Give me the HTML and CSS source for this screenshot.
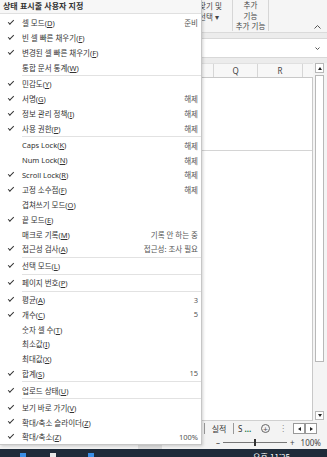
FILE: index.html
```html
<!DOCTYPE html>
<html lang="ko">
<head>
  <meta charset="UTF-8">
  <meta name="viewport" content="width=device-width, initial-scale=1.0">
  <title>상태 표시줄 사용자 지정</title>
  <link rel="stylesheet" href="styles.css">
</head>
<body>
  <div class="excel">
    <div class="ribbon">
      <div class="group find">
        <div>찾기 및</div>
        <div>선택 ▾</div>
      </div>
      <div class="group addins">
        <div>추가</div>
        <div>기능</div>
        <div class="group-label">추가 기능</div>
      </div>
      <div class="collapse">
        <svg width="7" height="4" viewBox="0 0 7 4"><polyline points="0.5,3.5 3.5,0.5 6.5,3.5" fill="none" stroke="#555" stroke-width="1"/></svg>
      </div>
    </div>

    <div class="formula-area">
      <div class="formula-box">
        <svg width="5" height="3" viewBox="0 0 5 3"><polyline points="0.5,0.5 2.5,2.5 4.5,0.5" fill="none" stroke="#555" stroke-width="1"/></svg>
      </div>
    </div>

    <div class="sheet">
      <div class="grid">
        <div class="col-heads">
          <div class="col-head first"></div>
          <div class="col-head q">Q</div>
          <div class="col-head r">R</div>
          <div class="col-head rest"></div>
        </div>
        <div class="cells">
          <div class="cell-row"></div>
        </div>
      </div>
      <div class="vscroll">
        <div class="sbtn up"><span class="tri-up"></span></div>
        <div class="thumb"></div>
        <div class="sbtn down"><span class="tri-down"></span></div>
      </div>
    </div>

    <div class="tabs">
      <span class="tab-sep"></span>
      <span class="tab">실적</span>
      <span class="tab-sep"></span>
      <span class="tab small">S <b class="more">...</b></span>
      <span class="add">+</span>
      <span class="dots">⋮</span>
      <span class="hbtn"><span class="tri-left"></span></span>
      <span class="hbtn"><span class="tri-right"></span></span>
    </div>

    <div class="status">
      <span class="view-btn"></span>
      <span class="zoom-minus">–</span>
      <span class="track"><span class="knob"></span></span>
      <span class="zoom-plus">+</span>
      <span class="zoom-val">100%</span>
    </div>

    <div class="taskbar">
      <span class="tb-icon blue"></span>
      <span class="tb-icon white"></span>
      <span class="tb-icon blue"></span>
      <span class="clock">오후 11:25</span>
    </div>
  </div>

  <div class="menu">
    <div class="menu-title">상태 표시줄 사용자 지정</div>
    <div class="menu-list">
      <div class="item on"><span class="chk"></span><span class="label">셀 모드(<u>D</u>)</span><span class="val">준비</span></div>
      <div class="item on"><span class="chk"></span><span class="label">빈 셀 빠른 채우기(<u>F</u>)</span></div>
      <div class="item on"><span class="chk"></span><span class="label">변경된 셀 빠른 채우기(<u>F</u>)</span></div>
      <div class="item"><span class="chk"></span><span class="label">통합 문서 통계(<u>W</u>)</span></div>
      <div class="sep"></div>
      <div class="item on"><span class="chk"></span><span class="label">민감도(<u>Y</u>)</span></div>
      <div class="item on"><span class="chk"></span><span class="label">서명(<u>G</u>)</span><span class="val">해제</span></div>
      <div class="item on"><span class="chk"></span><span class="label">정보 관리 정책(<u>I</u>)</span><span class="val">해제</span></div>
      <div class="item on"><span class="chk"></span><span class="label">사용 권한(<u>P</u>)</span><span class="val">해제</span></div>
      <div class="sep"></div>
      <div class="item"><span class="chk"></span><span class="label">Caps Lock(<u>K</u>)</span><span class="val">해제</span></div>
      <div class="item"><span class="chk"></span><span class="label">Num Lock(<u>N</u>)</span><span class="val">해제</span></div>
      <div class="item on"><span class="chk"></span><span class="label">Scroll Lock(<u>R</u>)</span><span class="val">해제</span></div>
      <div class="item on"><span class="chk"></span><span class="label">고정 소수점(<u>F</u>)</span><span class="val">해제</span></div>
      <div class="item"><span class="chk"></span><span class="label">겹쳐쓰기 모드(<u>O</u>)</span></div>
      <div class="item on"><span class="chk"></span><span class="label">끝 모드(<u>E</u>)</span></div>
      <div class="item"><span class="chk"></span><span class="label">매크로 기록(<u>M</u>)</span><span class="val">기록 안 하는 중</span></div>
      <div class="item on"><span class="chk"></span><span class="label">접근성 검사(<u>A</u>)</span><span class="val">접근성: 조사 필요</span></div>
      <div class="sep"></div>
      <div class="item on"><span class="chk"></span><span class="label">선택 모드(<u>L</u>)</span></div>
      <div class="sep"></div>
      <div class="item on"><span class="chk"></span><span class="label">페이지 번호(<u>P</u>)</span></div>
      <div class="sep"></div>
      <div class="item on"><span class="chk"></span><span class="label">평균(<u>A</u>)</span><span class="val">3</span></div>
      <div class="item on"><span class="chk"></span><span class="label">개수(<u>C</u>)</span><span class="val">5</span></div>
      <div class="item"><span class="chk"></span><span class="label">숫자 셀 수(<u>T</u>)</span></div>
      <div class="item"><span class="chk"></span><span class="label">최소값(<u>I</u>)</span></div>
      <div class="item"><span class="chk"></span><span class="label">최대값(<u>X</u>)</span></div>
      <div class="item on"><span class="chk"></span><span class="label">합계(<u>S</u>)</span><span class="val">15</span></div>
      <div class="sep"></div>
      <div class="item on"><span class="chk"></span><span class="label">업로드 상태(<u>U</u>)</span></div>
      <div class="sep"></div>
      <div class="item on"><span class="chk"></span><span class="label">보기 바로 가기(<u>V</u>)</span></div>
      <div class="item on"><span class="chk"></span><span class="label">확대/축소 슬라이더(<u>Z</u>)</span></div>
      <div class="item on"><span class="chk"></span><span class="label">확대/축소(<u>Z</u>)</span><span class="val">100%</span></div>
    </div>
  </div>
</body>
</html>
```

FILE: styles.css
```css
body {
  margin: 0;
  width: 327px;
  height: 457px;
  overflow: hidden;
  position: relative;
  font-family: "Noto Sans", "Noto Sans CJK KR", sans-serif;
  font-size: 7.5px;
  color: #333;
  background-color: #fff;
}

.excel {
  display: flex;
  flex-direction: column;
  height: 457px;
}

/* ribbon */
.ribbon {
  height: 33px;
  box-sizing: border-box;
  display: flex;
  padding-left: 197px;
  background-color: #f5f5f5;
  border-bottom: 1px solid #dadada;
  font-family: "Noto Sans CJK KR", sans-serif;
  color: #444;
  line-height: 11px;
}

.group {
  height: 31px;
}

.find {
  width: 35px;
  padding-left: 2px;
  box-sizing: border-box;
}

.addins {
  width: 35px;
  border-left: 1px solid #d6d6d6;
  border-right: 1px solid #d6d6d6;
  text-align: center;
  line-height: 10.5px;
}

.group-label {
  margin-top: 0;
}

.collapse {
  flex: 1;
  display: flex;
  justify-content: flex-end;
  align-items: flex-end;
  padding: 0 6px 3px 0;
}

.collapse svg,
.formula-box svg {
  display: block;
}

/* formula bar */
.formula-area {
  height: 30px;
  box-sizing: border-box;
  padding-top: 5px;
  background-color: #ececec;
}

.formula-box {
  height: 20px;
  box-sizing: border-box;
  background-color: #fff;
  border-top: 1px solid #d8d8d8;
  border-bottom: 1px solid #d8d8d8;
  display: flex;
  justify-content: flex-end;
  align-items: center;
  padding-right: 7px;
}

/* sheet */
.sheet {
  height: 358px;
  display: flex;
}

.grid {
  width: 313px;
  display: flex;
  flex-direction: column;
}

.col-heads {
  height: 15px;
  box-sizing: border-box;
  display: flex;
  background-color: #f7f7f7;
  border-top: 1px solid #e0e0e0;
  border-bottom: 1px solid #c8c8c8;
  font-size: 8px;
  color: #444;
}

.col-head {
  box-sizing: border-box;
  border-right: 1px solid #d6d6d6;
  text-align: center;
  line-height: 13px;
}

.col-head.first { width: 214px; }
.col-head.q { width: 44px; }
.col-head.r { width: 45px; }
.col-head.rest { flex: 1; border-right: none; }

.cells {
  flex: 1;
  background-color: #fff;
  border-right: 1px solid #c8c8c8;
  border-bottom: 1px solid #d0d0d0;
}

.cell-row {
  height: 72px;
  border-bottom: 1px solid #d4d4d4;
}

.vscroll {
  width: 14px;
  box-sizing: border-box;
  padding: 0 3px 1px 2px;
  display: flex;
  flex-direction: column;
  background-color: #f4f4f4;
}

.sbtn {
  height: 10px;
  box-sizing: border-box;
  border: 1px solid #b8b8b8;
  background-color: #fff;
  display: flex;
  justify-content: center;
  align-items: center;
}

.sbtn.down {
  height: 9px;
  margin-top: auto;
}

.thumb {
  margin-top: 2px;
  height: 287px;
  box-sizing: border-box;
  border: 1px solid #b8b8b8;
  background-color: #fff;
}

.tri-up {
  border-left: 2.5px solid transparent;
  border-right: 2.5px solid transparent;
  border-bottom: 3px solid #222;
}

.tri-down {
  border-left: 2.5px solid transparent;
  border-right: 2.5px solid transparent;
  border-top: 3px solid #222;
}

/* sheet tabs */
.tabs {
  height: 15px;
  display: flex;
  align-items: center;
  padding-left: 204px;
  background-color: #f3f3f3;
  font-family: "Noto Sans CJK KR", sans-serif;
  font-size: 8px;
  color: #333;
}

.tab-sep {
  width: 1px;
  height: 11px;
  background-color: #999;
}

.tab {
  width: 28px;
  text-align: center;
}

.tab.small {
  width: 22px;
  text-align: left;
  padding-left: 4px;
  box-sizing: border-box;
  font-family: "Noto Sans", sans-serif;
}

.more {
  color: #217346;
  font-weight: bold;
}

.add {
  width: 7px;
  height: 7px;
  margin-left: 5px;
  border: 1px solid #666;
  border-radius: 50%;
  display: flex;
  justify-content: center;
  align-items: center;
  font-size: 8px;
  line-height: 7px;
  color: #555;
}

.dots {
  margin-left: 9px;
  color: #888;
  font-family: "DejaVu Sans", sans-serif;
  font-size: 8px;
}

.hbtn {
  width: 12px;
  height: 11px;
  box-sizing: border-box;
  border: 1px solid #999;
  background-color: #fff;
  display: flex;
  justify-content: center;
  align-items: center;
}

.hbtn:first-of-type,
.dots + .hbtn {
  margin-left: 6px;
}

.tri-left {
  border-top: 2.5px solid transparent;
  border-bottom: 2.5px solid transparent;
  border-right: 3px solid #222;
}

.tri-right {
  border-top: 2.5px solid transparent;
  border-bottom: 2.5px solid transparent;
  border-left: 3px solid #222;
}

/* status bar */
.status {
  height: 13px;
  display: flex;
  align-items: center;
  padding-left: 138px;
  background-color: #f3f3f3;
  font-size: 8px;
  color: #444;
}

.view-btn {
  width: 24px;
  height: 13px;
  background-color: #dedede;
}

.zoom-minus {
  margin-left: 54px;
}

.track {
  width: 64px;
  height: 1px;
  margin-left: 3px;
  background-color: #777;
  display: flex;
  align-items: center;
  justify-content: center;
}

.knob {
  width: 2px;
  height: 7px;
  background-color: #333;
}

.zoom-plus {
  margin-left: 3px;
}

.zoom-val {
  margin-left: 6px;
}

/* taskbar */
.taskbar {
  height: 8px;
  overflow: hidden;
  display: flex;
  align-items: flex-start;
  background-color: #1f2b3a;
  padding-left: 20px;
}

.tb-icon {
  width: 6px;
  height: 6px;
  margin-top: 4px;
  margin-right: 24px;
}

.tb-icon.blue { background-color: #3a8ee6; }
.tb-icon.white { background-color: #e8e8e8; margin-right: 32px; }

.clock {
  margin-left: auto;
  margin-right: 37px;
  margin-top: 3px;
  color: #fff;
  font-family: "Noto Sans CJK KR", sans-serif;
  font-size: 8px;
  line-height: 10px;
}

/* context menu */
.menu {
  position: absolute;
  left: 0;
  top: 0;
  width: 201px;
  height: 444px;
  background-color: #fff;
  border-right: 1px solid #c6c6c6;
  border-bottom: 1px solid #c6c6c6;
  box-shadow: 1px 1px 3px rgba(0, 0, 0, 0.18);
  color: #333;
}

.menu-title {
  height: 13px;
  line-height: 12px;
  padding-left: 3px;
  border-bottom: 1px solid #e0e0e0;
  background-color: #f7f7f7;
  font-family: "Noto Sans CJK KR", sans-serif;
  font-weight: bold;
  font-size: 8px;
  color: #333;
}

.menu-list {
  padding-top: 1.3px;
}

.item {
  display: flex;
  align-items: center;
  height: 14.8px;
  padding-right: 3px;
  white-space: nowrap;
}

.chk {
  width: 22px;
  flex: none;
  padding-left: 8px;
  box-sizing: border-box;
}

.item.on .chk::after {
  content: '';
  display: block;
  width: 5px;
  height: 2.2px;
  margin-bottom: 2px;
  border-left: 1px solid #333;
  border-bottom: 1px solid #333;
  transform: rotate(-45deg);
}

.label {
  flex: 1;
}

.label u {
  text-underline-offset: 1px;
}

.val {
  color: #555;
}

.sep {
  height: 1px;
  margin: 0.5px 0 0.6px 22px;
  background-color: #e2e2e2;
}
```
